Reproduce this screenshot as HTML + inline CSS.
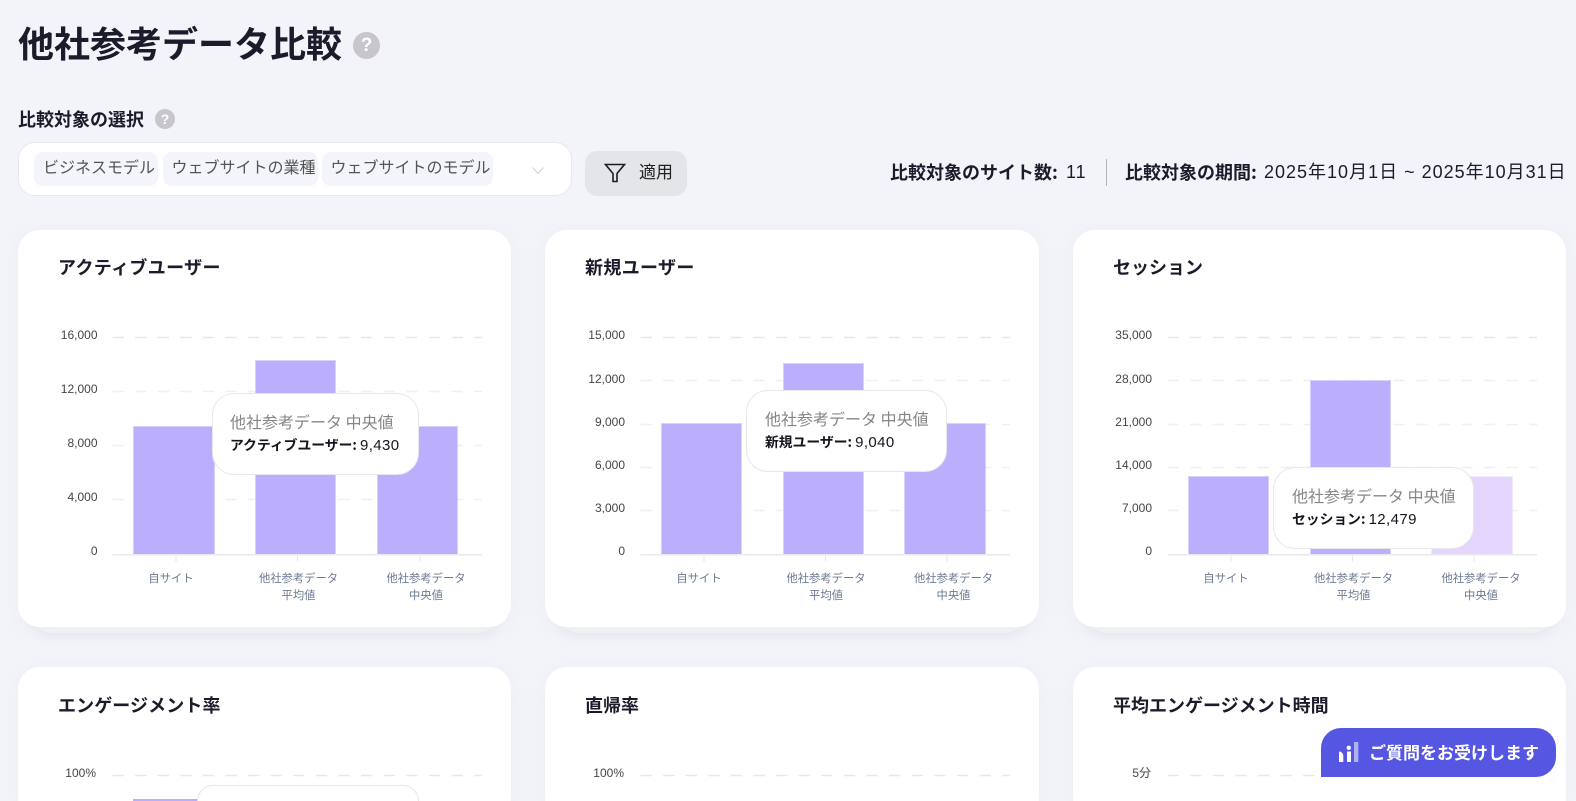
<!DOCTYPE html>
<html lang="ja"><head><meta charset="utf-8"><title>他社参考データ比較</title>
<style>
*{box-sizing:border-box}
html,body{margin:0;padding:0;width:1576px;height:801px;overflow:hidden;background:#f3f4f9}
body{position:relative;font-family:"Liberation Sans","Noto Sans CJK JP",sans-serif;color:#1b1b2b}
.a{position:absolute;white-space:nowrap}
.jp{font-family:"Noto Sans CJK JP","Liberation Sans",sans-serif}
.help{position:absolute;border-radius:50%;background:#c6c6cc;color:#fff;font-weight:700;text-align:center;font-family:"Liberation Sans",sans-serif}
.card{position:absolute;width:494px;background:#fff;border-radius:22px;box-shadow:0 4px 24px rgba(190,195,215,.12)}
.card.low{border-radius:22px 22px 0 0;height:134px;top:667px}
.under{position:absolute;width:466px;height:33px;background:#f3f4f4;border-radius:0 0 20px 20px;box-shadow:0 3px 10px rgba(190,195,215,.22)}
.ct{position:absolute;font-family:"Noto Sans CJK JP",sans-serif;font-weight:700;font-size:18px;line-height:26px;white-space:nowrap;color:#1b1b2b}
.chip{position:absolute;top:152px;height:34px;background:#f4f5fa;border-radius:9px;font-family:"Noto Sans CJK JP",sans-serif;font-size:16px;line-height:29px;color:#555;text-align:center;white-space:nowrap;padding-left:6px}
.tip{position:absolute;background:#fff;border:1px solid #e7e7ec;border-radius:22px;width:200px;height:82px;white-space:nowrap;font-family:"Noto Sans CJK JP",sans-serif}
.tip .t{position:absolute;left:18px;top:15px;font-size:16px;line-height:24px;color:#868689}
.tip .v{position:absolute;left:18px;top:39px;font-size:13.8px;line-height:22px;color:#15151f}
.tip b{font-weight:700}
.tip span{font-family:"Liberation Sans",sans-serif;font-size:15px;letter-spacing:.4px}
svg text{font-family:"Liberation Sans",sans-serif;font-size:12px;fill:#454545;text-anchor:end}
svg text.x{font-family:"Noto Sans CJK JP",sans-serif;font-size:11.3px;fill:#6c7a92;text-anchor:middle}
svg .g{stroke:#f0f0f2;stroke-width:1.5;stroke-dasharray:11.3 11.3;fill:none}
svg .g1{stroke:#e8e8eb}
svg .ax{stroke:#e9e9ee;stroke-width:1.5}
svg .tk{stroke:#e9e9ee;stroke-width:1}
svg .b{fill:#bbaefc;stroke:#d9d1fd;stroke-width:1}
</style></head><body>

<div class="a jp" style="left:18px;top:16px;font-size:36px;line-height:52px;font-weight:700">他社参考データ比較</div>
<div class="help" style="left:353px;top:32px;width:27px;height:27px;font-size:19px;line-height:27px">?</div>

<div class="a jp" style="left:18px;top:106px;font-size:18px;line-height:26px;font-weight:700">比較対象の選択</div>
<div class="help" style="left:155px;top:109px;width:20px;height:20px;font-size:14px;line-height:20px">?</div>

<div class="a" style="left:18px;top:142px;width:554px;height:54px;background:#fff;border:1px solid #e8e8ee;border-radius:17px"></div>
<div class="chip" style="left:34px;width:124px">ビジネスモデル</div>
<div class="chip" style="left:163px;width:155px">ウェブサイトの業種</div>
<div class="chip" style="left:322px;width:171px">ウェブサイトのモデル</div>
<svg class="a" style="left:531px;top:166px" width="14" height="10" viewBox="0 0 14 10"><path d="M1.500 1.500 7 7.500l5.500-6" fill="none" stroke="#cfcfd6" stroke-width="1"/></svg>

<div class="a" style="left:585px;top:151px;width:102px;height:45px;background:#e4e5e9;border-radius:12px"></div>
<svg class="a" style="left:604px;top:163px" width="22" height="20" viewBox="0 0 22 20"><path d="M1.500 1.500h19L13 10.500v8H9v-8z" fill="none" stroke="#1b1b22" stroke-width="1.600" stroke-linejoin="miter"/></svg>
<div class="a jp" style="left:639px;top:159px;font-size:17px;line-height:24px;color:#222">適用</div>

<div class="a jp" style="left:890px;top:159px;font-size:18px;line-height:26px;font-weight:700">比較対象のサイト数:</div>
<div class="a" style="left:1066px;top:159px;font-size:18px;line-height:26px;letter-spacing:1px">11</div>
<div class="a" style="left:1106px;top:159px;width:1px;height:27px;background:#b4b4ba"></div>
<div class="a jp" style="left:1125px;top:159px;font-size:18px;line-height:26px;font-weight:700">比較対象の期間:</div>
<div class="a" style="left:1264px;top:159px;font-size:18px;line-height:26px;letter-spacing:1px;font-family:'Liberation Sans','Noto Sans CJK JP',sans-serif">2025年10月1日 ~ 2025年10月31日</div>

<div class="under" style="left:32px;top:600px"></div>
<div class="under" style="left:559px;top:600px"></div>
<div class="under" style="left:1087px;top:600px"></div>

<div class="card" style="left:18px;top:230px;height:397px;width:493px"></div>
<div class="card" style="left:545px;top:230px;height:397px"></div>
<div class="card" style="left:1073px;top:230px;height:397px;width:493px"></div>
<div class="card low" style="left:18px;width:493px"></div>
<div class="card low" style="left:545px"></div>
<div class="card low" style="left:1073px;width:493px"></div>

<div class="ct" style="left:58px;top:254px;letter-spacing:.35px">アクティブユーザー</div>
<div class="ct" style="left:585px;top:254px;letter-spacing:.35px">新規ユーザー</div>
<div class="ct" style="left:1113px;top:254px">セッション</div>
<div class="ct" style="left:58px;top:692px;letter-spacing:.1px">エンゲージメント率</div>
<div class="ct" style="left:585px;top:692px">直帰率</div>
<div class="ct" style="left:1113px;top:692px">平均エンゲージメント時間</div>

<svg class="a" style="left:0;top:0" width="1576" height="801" viewBox="0 0 1576 801">
<!-- chart 1 -->
<path class="g g1" d="M112.500 337.500H482"/><path class="g" d="M112.500 391.500H482M112.500 445.500H482M112.500 499.500H482"/>
<rect class="b" x="133.500" y="426.500" width="81" height="128"/>
<rect class="b" x="255.500" y="360.500" width="80" height="194"/>
<rect class="b" x="377.500" y="426.500" width="80" height="128"/>
<path class="ax" d="M112.500 554.750H482"/><path class="tk" d="M176 555v7M297.500 555v7M420 555v7"/>
<text x="97.500" y="339">16,000</text><text x="97.500" y="393">12,000</text><text x="97.500" y="447">8,000</text><text x="97.500" y="501">4,000</text><text x="97.500" y="555">0</text>
<text class="x" x="171" y="582">自サイト</text><text class="x" x="298.500" y="582">他社参考データ</text><text class="x" x="298.500" y="599">平均値</text><text class="x" x="426" y="582">他社参考データ</text><text class="x" x="426" y="599">中央値</text>
<!-- chart 2 -->
<path class="g g1" d="M640.500 337.500H1010"/><path class="g" d="M640.500 380.500H1010M640.500 424.500H1010M640.500 467.500H1010M640.500 510.500H1010"/>
<rect class="b" x="661.500" y="423.500" width="80" height="131"/>
<rect class="b" x="783.500" y="363.500" width="80" height="191"/>
<rect class="b" x="904.500" y="423.500" width="81" height="131"/>
<path class="ax" d="M640.500 554.750H1010"/><path class="tk" d="M704 555v7M825.500 555v7M947 555v7"/>
<text x="625" y="339">15,000</text><text x="625" y="383">12,000</text><text x="625" y="426">9,000</text><text x="625" y="469">6,000</text><text x="625" y="512">3,000</text><text x="625" y="555">0</text>
<text class="x" x="699" y="582">自サイト</text><text class="x" x="826" y="582">他社参考データ</text><text class="x" x="826" y="599">平均値</text><text class="x" x="953.500" y="582">他社参考データ</text><text class="x" x="953.500" y="599">中央値</text>
<!-- chart 3 -->
<path class="g g1" d="M1167.500 337.500H1537"/><path class="g" d="M1167.500 380.500H1537M1167.500 424.500H1537M1167.500 467.500H1537M1167.500 510.500H1537"/>
<rect class="b" x="1188.500" y="476.500" width="80" height="78"/>
<rect class="b" x="1310.500" y="380.500" width="80" height="174"/>
<rect x="1431.500" y="476.500" width="81" height="78" fill="#e3d5fc"/>
<path class="ax" d="M1167.500 554.750H1537"/><path class="tk" d="M1231 555v7M1352.500 555v7M1474 555v7"/>
<text x="1152" y="339">35,000</text><text x="1152" y="383">28,000</text><text x="1152" y="426">21,000</text><text x="1152" y="469">14,000</text><text x="1152" y="512">7,000</text><text x="1152" y="555">0</text>
<text class="x" x="1226" y="582">自サイト</text><text class="x" x="1353.500" y="582">他社参考データ</text><text class="x" x="1353.500" y="599">平均値</text><text class="x" x="1481" y="582">他社参考データ</text><text class="x" x="1481" y="599">中央値</text>
<!-- row 2 -->
<path class="g g1" d="M112.500 775.500H482M640.500 775.500H1010M1167.500 775.500H1537"/>
<text x="96" y="777">100%</text><text x="624" y="777">100%</text><text x="1151" y="777" style="font-family:'Liberation Sans','Noto Sans CJK JP',sans-serif">5分</text>
<rect x="133" y="799" width="80" height="2" fill="#bbaefc"/>
</svg>

<div class="tip" style="left:212px;top:393px;width:207px">
  <div class="t" style="left:17px">他社参考データ 中央値</div>
  <div class="v" style="left:17px"><b>アクティブユーザー:</b> <span>9,430</span></div>
</div>
<div class="tip" style="left:746px;top:390px;width:201px">
  <div class="t">他社参考データ 中央値</div>
  <div class="v"><b>新規ユーザー:</b> <span>9,040</span></div>
</div>
<div class="tip" style="left:1273px;top:467px;width:201px">
  <div class="t">他社参考データ 中央値</div>
  <div class="v"><b>セッション:</b> <span>12,479</span></div>
</div>
<div class="tip" style="left:197px;top:785px;width:222px;height:16px;border-bottom:0;border-radius:16px 16px 0 0"></div>

<div class="a" style="left:1321px;top:728px;width:235px;height:49px;background:#5557e3;border-radius:20px 20px 20px 0"></div>
<svg class="a" style="left:1336px;top:740px" width="26" height="24" viewBox="0 0 26 24">
<path d="M3 22V11.500c2.500 0 4.300 2 4.300 4.500v6z" fill="#fff"/>
<circle cx="12.800" cy="7.800" r="2.200" fill="#fff"/>
<rect x="11" y="11.500" width="4" height="10.500" fill="#fff"/>
<rect x="18" y="2" width="4.300" height="20" fill="#aeb0f2"/>
</svg>
<div class="a jp" style="left:1369px;top:739px;font-size:17px;line-height:25px;font-weight:700;color:#fff">ご質問をお受けします</div>

</body></html>
